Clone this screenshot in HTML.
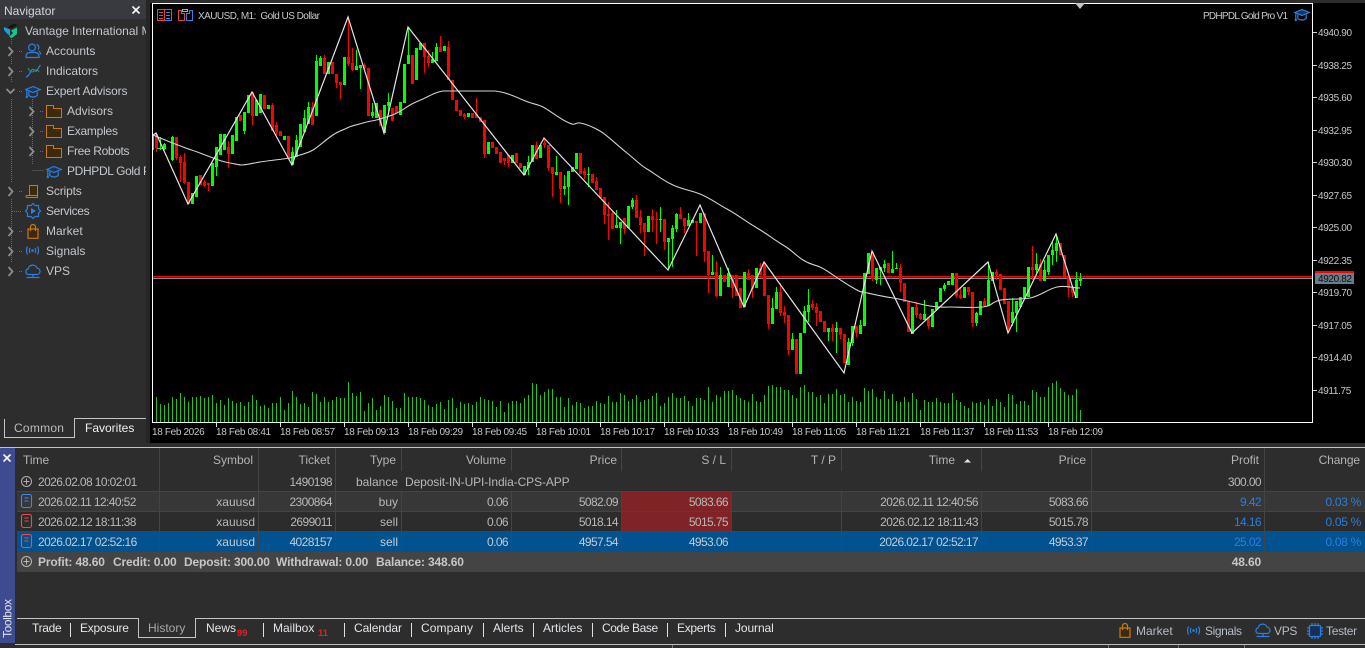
<!DOCTYPE html>
<html><head><meta charset="utf-8"><title>Chart</title>
<style>
html,body{margin:0;padding:0;background:#2d2d2d;width:1365px;height:648px;overflow:hidden}
svg{display:block;position:absolute;left:0;top:0}
text{font-family:"Liberation Sans",sans-serif;font-size:12px;white-space:pre}
.nav{fill:#c3c8ce}
.ax{fill:#c8c8c8;font-size:10px;letter-spacing:-.35px}
.hd{fill:#b4b4b4}
.r{fill:#b8b8b8}
.n{fill:#b8b8b8;letter-spacing:-.6px}
.b{fill:#2a7fdc;letter-spacing:-.6px}
.e{text-anchor:end}
.tb{fill:#e2e6ea}
.tot{fill:#c6c6c6;font-weight:bold;letter-spacing:-.15px}
.st{fill:#b4bcc6}
.red{fill:#e81c24;font-size:9.5px;font-weight:bold}
.lb{fill:#c8c8c8;font-size:10px}
</style></head><body>
<svg width="1365" height="648" viewBox="0 0 1365 648" xmlns="http://www.w3.org/2000/svg">
<defs>
<clipPath id="nc"><rect x="0" y="0" width="146" height="300"/></clipPath>
<symbol id="hat" viewBox="0 0 16 14" width="16" height="14" overflow="visible"><g fill="none" stroke="#2f7fe0" stroke-width="1.2"><path d="M.8 4.5 8 1.5l7.2 3L8 7.5z" fill="#17365f"/><path d="M3.8 6.6v4q4.200 2.800 8.400 0v-4"/><path d="M1.800 5.200v6"/></g><circle cx="1.800" cy="12" r="1.200" fill="#2f7fe0"/></symbol>
<symbol id="fold" viewBox="0 0 16 13" width="16" height="13" overflow="visible"><path d="M.5.5h7v3h8v9H.5z" fill="#3d2a0a" stroke="#c87a10"/></symbol>
<symbol id="bag" viewBox="0 0 12 15" width="12" height="15" overflow="visible"><path d="M1 5h10v9.300H1z" fill="#3d2a0a" stroke="#c87a10" stroke-width="1.200"/><path d="M3.500 7V3a2.500 2.500 0 0 1 5 0v4" fill="none" stroke="#c87a10" stroke-width="1.200"/></symbol>
<symbol id="sig" viewBox="0 0 15 9" width="15" height="9" overflow="visible"><g fill="none" stroke="#2f7fe0" stroke-width="1.200"><path d="M2.500.5Q.5 4.500 2.500 8.500M12.500.5q2 4 0 8M5 2q-1.200 2.500 0 5M10 2q1.200 2.500 0 5"/></g><circle cx="7.500" cy="4.500" r="1.300" fill="#2f7fe0"/></symbol>
<symbol id="cloud" viewBox="0 0 16 15" width="16" height="15" overflow="visible"><g fill="none" stroke="#2f7fe0" stroke-width="1.200"><path d="M4 10.500H3.500a2.800 2.800 0 0 1-.5-5.500 4.800 4.800 0 0 1 9.200-.8 3.200 3.200 0 0 1 .3 6.300z"/><path d="M8 10.500v2.500M1.500 13.500h13"/></g></symbol>
<symbol id="doc" viewBox="0 0 11 14" width="11" height="14" overflow="visible"><rect x=".5" y=".5" width="10" height="13" rx="2" fill="none" stroke="currentColor" stroke-width="1.100"/><path d="M3.500 4h4M3.500 7h4" stroke="currentColor"/></symbol>
</defs>

<rect width="1365" height="648" fill="#2d2d2d"/>

<!-- Navigator -->
<rect x="0" y="0" width="146" height="444" fill="#2d2d2d"/>
<rect x="0" y="0" width="146" height="19" fill="#383a40"/>
<rect x="146" y="0" width="4" height="444" fill="#262626"/>
<text x="4" y="15" fill="#d4d6d8">Navigator</text>
<path d="M132.500 6.500l7 7M139.500 6.500l-7 7" stroke="#fff" stroke-width="1.600" fill="none"/>

<g stroke="#6a6a6a" stroke-dasharray="1 1" fill="none">
<path d="M11.500 39V45M11.500 57V65M11.500 77V83M11.500 99V182M11.500 199V262"/>
<path d="M32.500 99V165M32.500 170.500H44"/>
<path d="M19 51.500h4M19 71.500h4M19 91.500h4M40 111.500h4M40 131.500h4M40 151.500h4M19 191.500h4M12 211.500h10M19 231.500h4M19 251.500h4M19 271.500h4"/>
</g>
<g fill="none" stroke="#8c8c8c" stroke-width="1.800">
<path d="M8.500 47 12.500 51.500 8.500 56M8.500 67 12.500 71.500 8.500 76M6.500 89 10.500 93 14.500 89M29.500 107 33.500 111.500 29.500 116M29.500 127 33.500 131.500 29.500 136M29.500 147 33.500 151.500 29.500 156M8.500 187 12.500 191.500 8.500 196M8.500 227 12.500 231.500 8.500 236M8.500 247 12.500 251.500 8.500 256M8.500 267 12.500 271.500 8.500 276"/>
</g>
<!-- logo -->
<path d="M7 27 14 23.500 18 25 11 29z" fill="#141414" stroke="#3a2a1a" stroke-width=".6"/>
<path d="M4 27 10 29.500V36L7 33.500 4 30z" fill="#1a9fe0"/>
<path d="M11 30.500 17 27.500V34L12 38 9 37 13 33z" fill="#17c48c"/>

<!-- Accounts icon -->
<g fill="none" stroke="#2f7fe0" stroke-width="1.200"><circle cx="32" cy="47.500" r="3.400"/><path d="M26 57.500v-1q0-3.500 3.500-4h6q3.500 .5 3.500 4v1z"/><path d="M36.500 44.500a3 3 0 0 1 1.500 5M38.500 51q2 .8 2 3.500"/></g>
<!-- Indicators icon -->
<path d="M26 77q3-1 4.500-5t3.500-2 2.500 1 4-6" fill="none" stroke="#2f7fe0" stroke-width="1.200"/><path d="M28 68q3 6 6 3t5 1" fill="none" stroke="#1f9a5c" stroke-width="1.100"/>
<use href="#hat" x="25" y="85"/>
<use href="#fold" x="46" y="105"/><use href="#fold" x="46" y="125"/><use href="#fold" x="46" y="145"/>
<use href="#hat" x="46" y="165"/>
<!-- Scripts -->
<path d="M29.500 185.500h8v10h-8zM26.500 195.500h11v2h-11q-1-1 0-2" fill="#3d2a0a" stroke="#c87a10"/>
<!-- Services -->
<path d="M33 203.500l2 2h3.500v3.300L40.500 211l-2 2.200v3.300H35l-2 2-2-2h-3.500v-3.300l-2-2.200 2-2.200v-3.300H31z" fill="none" stroke="#2f7fe0" stroke-width="1.200"/><path d="M31 208v6l5-3z" fill="#2f7fe0"/>
<use href="#bag" x="27" y="224"/>
<use href="#sig" x="25" y="246"/>
<use href="#cloud" x="25" y="264"/>

<g class="nav" clip-path="url(#nc)">
<text class="nav" x="25" y="35">Vantage International MT5</text>
<text class="nav" x="46" y="55">Accounts</text>
<text class="nav" x="46" y="75">Indicators</text>
<text class="nav" x="46" y="95" style="letter-spacing:-.13px">Expert Advisors</text>
<text class="nav" x="67" y="115">Advisors</text>
<text class="nav" x="67" y="135" style="letter-spacing:-.25px">Examples</text>
<text class="nav" x="67" y="155" style="letter-spacing:-.35px">Free Robots</text>
<text class="nav" x="67" y="175" style="letter-spacing:-.35px">PDHPDL Gold Pro V1</text>
<text class="nav" x="46" y="195" style="letter-spacing:-.15px">Scripts</text>
<text class="nav" x="46" y="215" style="letter-spacing:-.35px">Services</text>
<text class="nav" x="46" y="235">Market</text>
<text class="nav" x="46" y="255">Signals</text>
<text class="nav" x="46" y="275">VPS</text>
</g>
<!-- nav tabs -->
<path d="M4.500 419V437.500H74.500V418.500H146" fill="none" stroke="#c4c4c4"/>
<text x="14" y="432" fill="#b8bcc0" style="letter-spacing:.25px">Common</text>
<text x="85" y="432" fill="#eef0f2">Favorites</text>

<!-- Chart -->
<rect x="150" y="3" width="1215" height="440" fill="#000"/>
<rect x="150" y="0" width="1215" height="3" fill="#2d2d2d"/>

<!-- hlines -->
<rect x="153" y="276" width="1159" height="1.500" fill="#ff0000"/>
<rect x="153" y="278" width="1159" height="1" fill="#7d8a99"/>

<!-- volumes -->
<path fill="none" stroke="#25c425" stroke-width="1" shape-rendering="crispEdges" d="M156.500 397V422M160.500 404V422M164.500 405V422M168.500 403V422M172.500 397V422M176.500 399V422M180.500 393V422M184.500 397V422M188.500 402V422M192.500 397V422M196.500 397V422M200.500 396V422M204.500 398V422M208.500 397V422M212.500 395V422M216.500 403V422M220.500 400V422M224.500 405V422M228.500 398V422M232.500 401V422M236.500 403V422M240.500 402V422M244.500 406V422M248.500 402V422M252.500 395V422M256.500 400V422M260.500 406V422M264.500 405V422M268.500 408V422M272.500 403V422M276.500 403V422M280.500 397V422M284.500 410V422M288.500 403V422M292.500 391V422M296.500 397V422M300.500 404V422M304.500 403V422M308.500 407V422M312.500 392V422M316.500 394V422M320.500 402V422M324.500 397V422M328.500 402V422M332.500 400V422M336.500 397V422M340.500 398V422M344.500 398V422M348.500 382V422M352.500 393V422M356.500 396V422M360.500 392V422M364.500 411V422M368.500 403V422M372.500 398V422M376.500 410V422M380.500 406V422M384.500 395V422M388.500 397V422M392.500 401V422M396.500 408V422M400.500 408V422M404.500 393V422M408.500 397V422M412.500 397V422M416.500 397V422M420.500 398V422M424.500 400V422M428.500 405V422M432.500 407V422M436.500 404V422M440.500 402V422M444.500 409V422M448.500 400V422M452.500 398V422M456.500 408V422M460.500 402V422M464.500 404V422M468.500 403V422M472.500 405V422M476.500 402V422M480.500 397V422M484.500 399V422M488.500 400V422M492.500 401V422M496.500 407V422M500.500 401V422M504.500 412V422M508.500 403V422M512.500 401V422M516.500 401V422M520.500 403V422M524.500 398V422M528.500 395V422M532.500 383V422M536.500 384V422M540.500 395V422M544.500 392V422M548.500 389V422M552.500 389V422M556.500 397V422M560.500 397V422M564.500 407V422M568.500 398V422M572.500 405V422M576.500 402V422M580.500 403V422M584.500 408V422M588.500 406V422M592.500 406V422M596.500 401V422M600.500 403V422M604.500 404V422M608.500 396V422M612.500 402V422M616.500 402V422M620.500 393V422M624.500 395V422M628.500 401V422M632.500 399V422M636.500 395V422M640.500 402V422M644.500 400V422M648.500 399V422M652.500 396V422M656.500 393V422M660.500 406V422M664.500 403V422M668.500 397V422M672.500 393V422M676.500 398V422M680.500 398V422M684.500 396V422M688.500 401V422M692.500 406V422M696.500 398V422M700.500 398V422M704.500 400V422M708.500 387V422M712.500 402V422M716.500 395V422M720.500 397V422M724.500 391V422M728.500 391V422M732.500 390V422M736.500 395V422M740.500 398V422M744.500 400V422M748.500 402V422M752.500 394V422M756.500 401V422M760.500 402V422M764.500 395V422M768.500 386V422M772.500 385V422M776.500 387V422M780.500 387V422M784.500 390V422M788.500 390V422M792.500 395V422M796.500 398V422M800.500 387V422M804.500 385V422M808.500 392V422M812.500 392V422M816.500 397V422M820.500 395V422M824.500 403V422M828.500 394V422M832.500 394V422M836.500 389V422M840.500 395V422M844.500 394V422M848.500 402V422M852.500 397V422M856.500 401V422M860.500 402V422M864.500 388V422M868.500 391V422M872.500 389V422M876.500 397V422M880.500 399V422M884.500 391V422M888.500 399V422M892.500 394V422M896.500 401V422M900.500 402V422M904.500 397V422M908.500 402V422M912.500 393V422M916.500 399V422M920.500 410V422M924.500 400V422M928.500 402V422M932.500 402V422M936.500 398V422M940.500 402V422M944.500 403V422M948.500 403V422M952.500 393V422M956.500 400V422M960.500 402V422M964.500 406V422M968.500 408V422M972.500 402V422M976.500 403V422M980.500 402V422M984.500 405V422M988.500 399V422M992.500 406V422M996.500 399V422M1000.500 402V422M1004.500 407V422M1008.500 394V422M1012.500 395V422M1016.500 404V422M1020.500 401V422M1024.500 401V422M1028.500 405V422M1032.500 390V422M1036.500 392V422M1040.500 397V422M1044.500 397V422M1048.500 387V422M1052.500 383V422M1056.500 381V422M1060.500 388V422M1064.500 392V422M1068.500 395V422M1072.500 395V422M1076.500 389V422M1080.500 410V422"/>

<!-- green wicks -->
<path fill="none" stroke="#00ff00" stroke-width="1" shape-rendering="crispEdges" d="M160.500 137V150M164.500 143V150M172.500 136V161M216.500 147V176M244.500 112V134M292.500 147V165M296.500 135V157M304.500 110V132M308.500 102V124M316.500 55V116M320.500 56V66M356.500 50V70M360.500 65V89M372.500 103V118M388.500 93V115M408.500 27V64M432.500 52V63M436.500 43V61M528.500 156V175M556.500 156V175M564.500 175V195M568.500 171V205M588.500 167V187M616.500 210V228M620.500 222V244M632.500 198V209M660.500 207V232M668.500 238V270M672.500 225V267M676.500 213V232M688.500 213V226M712.500 255V275M720.500 267V296M728.500 268V287M772.500 298V324M776.500 287V309M792.500 333V350M804.500 306V333M808.500 289V322M828.500 328V341M836.500 322V353M848.500 338V365M852.500 326V346M860.500 320V334M876.500 268V284M880.500 267V285M884.500 260V272M892.500 251V273M896.500 263V269M924.500 300V320M944.500 283V291M976.500 312V326M988.500 262V306M1012.500 298V326M1016.500 301V332M1036.500 253V273M1044.500 260V281M1048.500 255V275M1052.500 242V265M1056.500 235V262M1076.500 272V298M1080.500 273V286"/>
<!-- red wicks -->
<path fill="none" stroke="#ff0000" stroke-width="1" shape-rendering="crispEdges" d="M156.500 133V152M176.500 137V160M180.500 155V182M184.500 153V184M204.500 180V187M208.500 183V191M228.500 141V168M252.500 92V125M272.500 103V131M276.500 122V135M312.500 102V125M324.500 55V74M336.500 74V88M340.500 82V99M348.500 17V66M352.500 48V71M364.500 63V70M424.500 43V73M428.500 50V67M440.500 36V52M448.500 41V80M464.500 113V119M476.500 98V118M484.500 120V158M504.500 158V165M508.500 155V167M536.500 142V159M544.500 138V148M548.500 145V171M552.500 167V197M560.500 172V203M584.500 168V179M596.500 177V190M604.500 197V224M608.500 202V240M612.500 211V229M624.500 218V234M636.500 195V218M640.500 210V233M644.500 223V256M652.500 209V232M656.500 212V244M664.500 219V250M680.500 207V219M684.500 218V233M696.500 221V256M704.500 213V262M708.500 251V293M716.500 261V297M732.500 275V298M748.500 269V280M752.500 275V298M760.500 263V275M768.500 295V329M780.500 283V316M784.500 306V323M788.500 315V355M812.500 300V310M816.500 303V326M832.500 324V341M840.500 328V339M856.500 326V337M872.500 252V281M900.500 264V292M916.500 302V318M920.500 313V320M928.500 317V329M956.500 273V298M960.500 287V299M968.500 287V295M972.500 292V327M984.500 298V307M996.500 269V280M1008.500 301V333M1032.500 246V280M1040.500 259V281M1068.500 277V297M1072.500 287V297"/>
<!-- green bodies -->
<rect x="153" y="134" width="1" height="16" fill="#00ff00"/>
<rect x="157" y="148" width="9" height="1" fill="#00ff00"/>
<path fill="none" stroke="#00ff00" stroke-width="3" shape-rendering="crispEdges" d="M164.500 144V149M172.500 137V160M192.500 193V204M196.500 176V197M212.500 163V186M216.500 147V167M220.500 134V155M224.500 134V150M232.500 135V154M236.500 117V141M244.500 112V131M248.500 95V113M256.500 100V116M260.500 94V113M268.500 105V109M284.500 136V140M292.500 152V165M296.500 140V157M300.500 124V147M304.500 118V132M308.500 107V124M316.500 61V116M320.500 58V66M328.500 62V74M344.500 57V85M356.500 66V70M360.500 65V68M372.500 112V116M376.500 103V118M384.500 105V133M388.500 102V106M400.500 102V115M404.500 64V103M408.500 55V64M416.500 48V80M420.500 43V50M432.500 59V63M436.500 47V61M444.500 46V51M468.500 113V117M488.500 142V154M512.500 155V163M524.500 166V175M528.500 162V168M532.500 145V162M540.500 145V158M556.500 172V175M564.500 186V189M568.500 171V187M572.500 167V172M576.500 153V169M588.500 174V175M616.500 225V228M620.500 222V228M628.500 206V228M632.500 200V207M648.500 216V232M660.500 219V220M668.500 238V242M672.500 228V239M676.500 214V229M688.500 220V226M692.500 220V223M700.500 213V223M712.500 272V275M720.500 275V296M728.500 273V287M744.500 272V307M756.500 268V288M772.500 308V324M776.500 292V309M792.500 339V350M800.500 333V374M804.500 311V333M808.500 305V312M828.500 328V332M836.500 328V332M848.500 342V365M852.500 326V343M860.500 325V334M864.500 273V326M868.500 253V274M876.500 268V280M880.500 267V270M884.500 264V268M892.500 269V273M896.500 268V269M912.500 307V334M924.500 314V320M932.500 309V327M936.500 302V310M940.500 288V302M944.500 285V289M948.500 281V285M952.500 273V285M964.500 287V298M976.500 313V323M980.500 301V315M988.500 280V306M992.500 272V281M1012.500 312V323M1016.500 301V313M1020.500 297V307M1024.500 287V298M1028.500 267V297M1036.500 264V270M1044.500 270V281M1048.500 255V272M1052.500 250V255M1056.500 243V251M1076.500 280V298M1080.500 279V281"/>
<!-- red bodies -->
<path fill="none" stroke="#ff0000" stroke-width="3" shape-rendering="crispEdges" d="M156.500 134V148M176.500 137V158M180.500 157V163M184.500 162V183M188.500 182V204M200.500 175V185M204.500 182V186M208.500 183V185M228.500 147V154M240.500 115V121M252.500 92V116M264.500 95V109M272.500 105V131M276.500 125V132M280.500 131V136M288.500 136V157M312.500 107V125M324.500 58V74M332.500 62V74M336.500 74V83M340.500 82V85M348.500 57V64M352.500 63V70M364.500 65V68M368.500 68V116M380.500 110V126M392.500 108V121M396.500 106V113M412.500 55V84M424.500 43V57M428.500 56V63M440.500 47V52M448.500 47V80M452.500 80V100M456.500 100V111M460.500 110V116M464.500 114V117M472.500 113V118M476.500 114V118M480.500 117V122M484.500 120V154M492.500 142V148M496.500 147V154M500.500 152V163M504.500 158V161M508.500 155V163M516.500 153V163M520.500 163V168M536.500 145V159M544.500 143V145M548.500 145V168M552.500 167V174M560.500 172V189M580.500 153V174M584.500 171V175M592.500 174V183M596.500 181V190M600.500 188V198M604.500 197V215M608.500 214V216M612.500 213V229M624.500 218V229M636.500 200V218M640.500 217V225M644.500 223V232M652.500 216V220M656.500 219V220M664.500 219V242M680.500 214V219M684.500 218V226M696.500 221V223M704.500 213V252M708.500 251V275M716.500 272V296M724.500 275V282M732.500 275V288M736.500 275V296M740.500 288V308M748.500 273V280M752.500 275V289M760.500 268V275M764.500 263V296M768.500 295V324M780.500 292V313M784.500 312V316M788.500 315V350M796.500 339V374M812.500 304V308M816.500 307V313M820.500 311V322M824.500 321V332M832.500 328V332M840.500 328V335M844.500 334V363M856.500 326V333M872.500 252V279M888.500 263V273M900.500 268V283M904.500 283V302M908.500 301V332M916.500 307V315M920.500 314V319M928.500 317V326M956.500 273V296M960.500 295V298M968.500 287V292M972.500 292V323M984.500 301V306M996.500 272V275M1000.500 274V290M1004.500 288V304M1008.500 301V330M1032.500 267V270M1040.500 264V281M1060.500 243V255M1064.500 255V278M1068.500 277V288M1072.500 287V293"/>

<!-- moving average -->
<path fill="none" stroke="#d2d2d2" stroke-width="1.100" stroke-linejoin="round" d="M153 135C160 138 165 140 170 142S178 145 183 147 195 151 200 153 208 156 213 158 224 162 230 163 238 165 242 165 254 163 260 162 275 160 283 159 294 157 300 155 308 153 313 150 322 143 330 137 341 131 347 128 357 125 363 123 374 121 380 119 391 116 397 113 405 108 410 105 421 100 427 97 437 92 443 91 H495C505 92 514 96 523 100S537 104 543 107 557 117 567 122 574 122 580 123 593 127 600 131 617 145 627 153 640 165 647 169 662 180 673 185 690 190 700 194 716 203 727 209 745 221 757 228 773 239 783 245 795 255 803 260 813 264 820 267 838 279 850 286 858 291 863 292 880 296 893 298 918 304 930 306 944 307 950 307 975 308 983 307 990 304 997 301 1020 300 1030 298 1048 289 1057 287 1072 288 1080 288"/>
<!-- zigzag -->
<polyline fill="none" stroke="#e6e6e6" stroke-width="1.200" points="153,135 156,133 188,204 252,92 292,165 348,17 384,133 408,27 524,175 544,138 668,270 700,205 744,307 764,262 844,373 872,251 912,333 988,262 1008,333 1056,234 1076,298"/>

<!-- frame -->
<path d="M152.500 423V3.500H1312.500V422.500H152" fill="none" stroke="#fff" shape-rendering="crispEdges"/>
<path d="M1075 3h10l-5 6z" fill="#bfc4c8"/>

<!-- chart labels -->
<g fill="none" shape-rendering="crispEdges">
<rect x="164.500" y="9.500" width="7" height="11" stroke="#3f7fe0"/>
<rect x="157.500" y="9.500" width="7" height="11" stroke="#e04848"/>
<path d="M159 12.500h4M159 15.500h4M159 18.500h4" stroke="#e04848"/>
<path d="M166 12.500h4M166 15.500h4M166 18.500h4" stroke="#3f7fe0"/>
<path d="M178.500 20.500V10.500h3v3h3v7z" stroke="#e04848"/>
<path d="M186.500 20.500v-7h3v-3h3v10z" stroke="#3f7fe0"/>
<rect x="182.500" y="9.500" width="5" height="2" stroke="#aaa"/>
</g>
<text class="lb" x="198" y="19" textLength="122" lengthAdjust="spacing">XAUUSD, M1:  Gold US Dollar</text>
<text class="lb" x="1203" y="19" textLength="85" lengthAdjust="spacing">PDHPDL Gold Pro V1</text>
<use href="#hat" x="1294" y="8"/>

<!-- right axis -->
<path stroke="#d0d0d0" fill="none" shape-rendering="crispEdges" d="M1313 32.500h4M1313 65.500h4M1313 97.500h4M1313 130.500h4M1313 162.500h4M1313 195.500h4M1313 227.500h4M1313 260.500h4M1313 292.500h4M1313 325.500h4M1313 357.500h4M1313 390.500h4"/>
<g class="ax">
<text class="ax" x="1318" y="36">4940.90</text>
<text class="ax" x="1318" y="69">4938.25</text>
<text class="ax" x="1318" y="101">4935.60</text>
<text class="ax" x="1318" y="134">4932.95</text>
<text class="ax" x="1318" y="166">4930.30</text>
<text class="ax" x="1318" y="199">4927.65</text>
<text class="ax" x="1318" y="231">4925.00</text>
<text class="ax" x="1318" y="264">4922.35</text>
<text class="ax" x="1318" y="296">4919.70</text>
<text class="ax" x="1318" y="329">4917.05</text>
<text class="ax" x="1318" y="361">4914.40</text>
<text class="ax" x="1318" y="394">4911.75</text>
</g>
<rect x="1315" y="271" width="39" height="2" fill="#ff0000"/>
<rect x="1315" y="273" width="39" height="11" fill="#6b7c8c"/>
<text class="ax" x="1318" y="282" style="fill:#0e0e0e">4920.82</text>

<!-- time axis -->
<path stroke="#e0e0e0" fill="none" shape-rendering="crispEdges" d="M216.500 423v4M280.500 423v4M344.500 423v4M408.500 423v4M472.500 423v4M536.500 423v4M600.500 423v4M664.500 423v4M728.500 423v4M792.500 423v4M856.500 423v4M920.500 423v4M984.500 423v4M1048.500 423v4"/>
<g>
<text class="ax" x="152" y="435">18 Feb 2026</text>
<text class="ax" x="216" y="435">18 Feb 08:41</text>
<text class="ax" x="280" y="435">18 Feb 08:57</text>
<text class="ax" x="344" y="435">18 Feb 09:13</text>
<text class="ax" x="408" y="435">18 Feb 09:29</text>
<text class="ax" x="472" y="435">18 Feb 09:45</text>
<text class="ax" x="536" y="435">18 Feb 10:01</text>
<text class="ax" x="600" y="435">18 Feb 10:17</text>
<text class="ax" x="664" y="435">18 Feb 10:33</text>
<text class="ax" x="728" y="435">18 Feb 10:49</text>
<text class="ax" x="792" y="435">18 Feb 11:05</text>
<text class="ax" x="856" y="435">18 Feb 11:21</text>
<text class="ax" x="920" y="435">18 Feb 11:37</text>
<text class="ax" x="984" y="435">18 Feb 11:53</text>
<text class="ax" x="1048" y="435">18 Feb 12:09</text>
</g>

<!-- Toolbox area -->
<rect x="0" y="443" width="1365" height="205" fill="#2d2d2d"/>
<rect x="0" y="447" width="1365" height="1" fill="#c4c4c4"/>
<rect x="0" y="448" width="15" height="195" fill="#3d4b91"/>
<path d="M3.500 454.500l7 7M10.500 454.500l-7 7" stroke="#fff" stroke-width="1.600"/>
<text transform="translate(11.500 638) rotate(-90)" fill="#dfe3ea" style="letter-spacing:-.4px">Toolbox</text>

<!-- rows -->
<rect x="17" y="492" width="1348" height="19" fill="#373737"/>
<rect x="17" y="512" width="1348" height="19" fill="#2c2c2c"/>
<rect x="17" y="532" width="1348" height="20" fill="#02528f"/>
<rect x="17" y="552" width="1348" height="20" fill="#444"/>
<rect x="622" y="492" width="110" height="39" fill="#7f2326"/>
<path stroke="#444" fill="none" shape-rendering="crispEdges" d="M17 491.500H1365M17 511.500H1365M17 531.500H1365"/>
<path stroke="#444" fill="none" shape-rendering="crispEdges" d="M159.500 448V552M258.500 448V552M335.500 448V552M401.500 448V471M401.500 492V552M511.500 448V471M511.500 492V552M621.500 448V471M621.500 492V552M731.500 448V471M731.500 492V552M841.500 448V471M841.500 492V552M981.500 448V471M981.500 492V552M1091.500 448V552M1264.500 448V552"/>

<!-- header -->
<text class="hd" x="23" y="464">Time</text>
<text class="hd e" x="253" y="464">Symbol</text>
<text class="hd e" x="330" y="464">Ticket</text>
<text class="hd e" x="396" y="464">Type</text>
<text class="hd e" x="506" y="464">Volume</text>
<text class="hd e" x="617" y="464">Price</text>
<text class="hd e" x="726" y="464">S / L</text>
<text class="hd e" x="836" y="464">T / P</text>
<text class="hd e" x="955" y="464">Time</text>
<path d="M964 462.500l3.500-3.500 3.500 3.500z" fill="#e0e0e0"/>
<text class="hd e" x="1086" y="464">Price</text>
<text class="hd e" x="1259" y="464">Profit</text>
<text class="hd e" x="1360" y="464" style="letter-spacing:-.1px">Change</text>

<!-- row 1 -->
<g fill="none" stroke="#b0b0b0"><circle cx="26.500" cy="481.500" r="5"/><path d="M23.500 481.500h6M26.500 478.500v6"/></g>
<text class="n" x="38" y="486">2026.02.08 10:02:01</text>
<text class="n e" x="332" y="486">1490198</text>
<text class="r e" x="398" y="486">balance</text>
<text class="r" x="405" y="486" style="letter-spacing:-.1px">Deposit-IN-UPI-India-CPS-APP</text>
<text class="n e" x="1261" y="486">300.00</text>

<!-- row 2 -->
<use href="#doc" x="21" y="494" style="color:#3f86ea"/>
<text class="n" x="38" y="506">2026.02.11 12:40:52</text>
<text class="r e" x="255" y="506">xauusd</text>
<text class="n e" x="332" y="506">2300864</text>
<text class="r e" x="398" y="506">buy</text>
<text class="n e" x="508" y="506">0.06</text>
<text class="n e" x="618" y="506">5082.09</text>
<text class="n e" x="728" y="506">5083.66</text>
<text class="n e" x="978" y="506">2026.02.11 12:40:56</text>
<text class="n e" x="1088" y="506">5083.66</text>
<text class="b e" x="1261" y="506">9.42</text>
<text class="b e" x="1361" y="506" style="letter-spacing:-.3px">0.03 %</text>

<!-- row 3 -->
<use href="#doc" x="21" y="514" style="color:#ee4b4b"/>
<text class="n" x="38" y="526">2026.02.12 18:11:38</text>
<text class="r e" x="255" y="526">xauusd</text>
<text class="n e" x="332" y="526">2699011</text>
<text class="r e" x="398" y="526">sell</text>
<text class="n e" x="508" y="526">0.06</text>
<text class="n e" x="618" y="526">5018.14</text>
<text class="n e" x="728" y="526">5015.75</text>
<text class="n e" x="978" y="526">2026.02.12 18:11:43</text>
<text class="n e" x="1088" y="526">5015.78</text>
<text class="b e" x="1261" y="526">14.16</text>
<text class="b e" x="1361" y="526" style="letter-spacing:-.3px">0.05 %</text>

<!-- row 4 -->
<use href="#doc" x="21" y="534" style="color:#ee4b4b"/>
<text class="n" x="38" y="546" style="fill:#c4ccd4">2026.02.17 02:52:16</text>
<text class="r e" x="255" y="546" style="fill:#c4ccd4">xauusd</text>
<text class="n e" x="332" y="546" style="fill:#c4ccd4">4028157</text>
<text class="r e" x="398" y="546" style="fill:#c4ccd4">sell</text>
<text class="n e" x="508" y="546" style="fill:#c4ccd4">0.06</text>
<text class="n e" x="618" y="546" style="fill:#c4ccd4">4957.54</text>
<text class="n e" x="728" y="546" style="fill:#c4ccd4">4953.06</text>
<text class="n e" x="978" y="546" style="fill:#c4ccd4">2026.02.17 02:52:17</text>
<text class="n e" x="1088" y="546" style="fill:#c4ccd4">4953.37</text>
<text class="b e" x="1261" y="546">25.02</text>
<text class="b e" x="1361" y="546" style="letter-spacing:-.3px">0.08 %</text>

<!-- total -->
<g fill="none" stroke="#b8b8b8"><circle cx="26.500" cy="561.500" r="5"/><path d="M23.500 561.500h6M26.500 558.500v6"/></g>
<text class="tot" x="38" y="566">Profit: 48.60</text>
<text class="tot" x="113" y="566">Credit: 0.00</text>
<text class="tot" x="184" y="566">Deposit: 300.00</text>
<text class="tot" x="276" y="566">Withdrawal: 0.00</text>
<text class="tot" x="376" y="566">Balance: 348.60</text>
<text class="tot e" x="1261" y="566">48.60</text>

<!-- bottom tabs -->
<path d="M17 618.500H138.500V637.500H195.500V618.500H1365" fill="none" stroke="#c4c4c4" shape-rendering="crispEdges"/>
<rect x="15" y="644" width="1350" height="1" fill="#bcbcbc"/>
<path stroke="#e0e0e0" shape-rendering="crispEdges" fill="none" d="M70.500 623v14M263.500 623v14M344.500 623v14M411.500 623v14M483.500 623v14M533.500 623v14M592.500 623v14M667.500 623v14M725.500 623v14"/>
<path stroke="#777" shape-rendering="crispEdges" fill="none" d="M672.500 645v3M1108.500 645v3M1178.500 645v3M1244.500 645v3"/>
<text class="tb" x="32" y="632" style="letter-spacing:-.3px">Trade</text>
<text class="tb" x="80" y="632" style="letter-spacing:-.25px">Exposure</text>
<text x="148" y="632" fill="#a4a8ac">History</text>
<text class="tb" x="206" y="632">News</text>
<text class="red" x="237" y="636">99</text>
<text class="tb" x="273" y="632">Mailbox</text>
<text class="red" x="318" y="636">11</text>
<text class="tb" x="354" y="632" style="letter-spacing:-.1px">Calendar</text>
<text class="tb" x="421" y="632" style="letter-spacing:.1px">Company</text>
<text class="tb" x="493" y="632">Alerts</text>
<text class="tb" x="543" y="632">Articles</text>
<text class="tb" x="602" y="632" style="letter-spacing:-.4px">Code Base</text>
<text class="tb" x="677" y="632" style="letter-spacing:-.3px">Experts</text>
<text class="tb" x="735" y="632" style="letter-spacing:-.1px">Journal</text>

<!-- status -->
<use href="#bag" x="1119" y="623"/>
<text class="st" x="1136" y="635">Market</text>
<use href="#sig" x="1186" y="626"/>
<text class="st" x="1205" y="635" style="letter-spacing:-.4px">Signals</text>
<use href="#cloud" x="1255" y="623"/>
<text class="st" x="1274" y="635" style="letter-spacing:-.3px">VPS</text>
<g fill="none" stroke="#2f7fe0" stroke-width="1.200"><rect x="1309.500" y="625.500" width="11" height="11" rx="1" fill="#153054"/><path d="M1312 623v2M1315 623v2M1318 623v2M1312 637v2M1315 637v2M1318 637v2M1307 628h2M1307 631h2M1307 634h2M1321 628h2M1321 631h2M1321 634h2"/></g>
<text class="st" x="1326" y="635" style="letter-spacing:-.3px">Tester</text>
</svg>
</body></html>
